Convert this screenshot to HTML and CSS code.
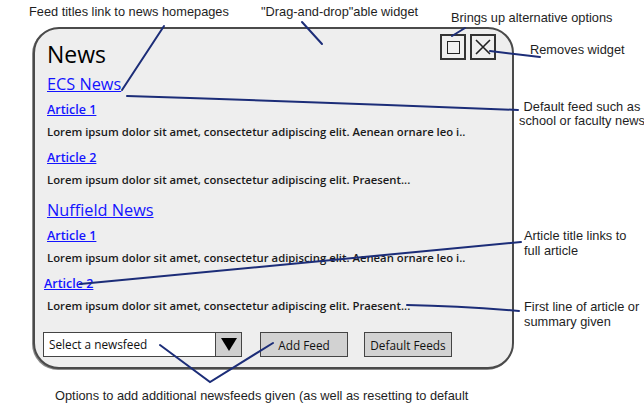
FILE: index.html
```html
<!DOCTYPE html>
<html>
<head>
<meta charset="utf-8">
<link rel="stylesheet" href="styles.css">
</head>
<body>
<div class="canvas">
  <div class="widget">
    <div class="widget-header">
      <h1 class="widget-title">News</h1>
      <div class="widget-tools">
        <button class="tool" aria-label="Options"><span class="tool-square"></span></button>
        <button class="tool" aria-label="Remove">
          <svg width="16" height="16" viewBox="0 0 16 16"><path d="M1 1 L15 15 M15 1 L1 15" stroke="#222" stroke-width="1.6" fill="none"/></svg>
        </button>
      </div>
    </div>

    <section class="feed">
      <a class="feed-title" href="#">ECS News</a>
      <a class="article" href="#">Article 1</a>
      <p class="summary">Lorem ipsum dolor sit amet, consectetur adipiscing elit. Aenean ornare leo i..</p>
      <a class="article" href="#">Article 2</a>
      <p class="summary">Lorem ipsum dolor sit amet, consectetur adipiscing elit. Praesent...</p>
    </section>

    <section class="feed">
      <a class="feed-title" href="#">Nuffield News</a>
      <a class="article" href="#">Article 1</a>
      <p class="summary">Lorem ipsum dolor sit amet, consectetur adipiscing elit. Aenean ornare leo i..</p>
      <a class="article shifted" href="#">Article 2</a>
      <p class="summary">Lorem ipsum dolor sit amet, consectetur adipiscing elit. Praesent...</p>
    </section>

    <div class="controls">
      <div class="select">
        <span class="select-text">Select a newsfeed</span>
        <span class="select-arrow"></span>
      </div>
      <button class="btn add">Add Feed</button>
      <button class="btn reset">Default Feeds</button>
    </div>
  </div>

  <p class="note note-feed">Feed titles link to news homepages</p>
  <p class="note note-drag">"Drag-and-drop"able widget</p>
  <p class="note note-options">Brings up alternative options</p>
  <p class="note note-remove">Removes widget</p>
  <p class="note note-default">Default feed such as<br>school or faculty news</p>
  <p class="note note-article">Article title links to<br>full article</p>
  <p class="note note-first">First line of article or<br>summary given</p>
  <p class="note note-add">Options to add additional newsfeeds given (as well as resetting to default</p>

  <svg class="leaders" width="644" height="420" viewBox="0 0 644 420">
    <g stroke="#1c2d78" stroke-width="2" fill="none" stroke-linecap="round">
      <path d="M164 26 L122 90"/>
      <path d="M302 22 L322 44"/>
      <path d="M127 96 Q320 102 518 110"/>
      <path d="M465 28 L452 36"/>
      <path d="M490 51 L540 57"/>
      <path d="M80 284 L521 242"/>
      <path d="M407 305 Q460 306 519 311"/>
      <path d="M160 345 L210 382 L273 343"/>
    </g>
  </svg>
</div>
</body>
</html>
```
FILE: styles.css
```css
html, body {
  margin: 0;
  padding: 0;
  background: #ffffff;
}

.canvas {
  position: relative;
  width: 644px;
  height: 420px;
  overflow: hidden;
  padding: 27px 0 0 33px;
  box-sizing: border-box;
}

.widget {
  width: 481px;
  height: 342px;
  box-sizing: border-box;
  background: #eeeeee;
  border: 2px solid #4a4a4a;
  border-radius: 26px;
  box-shadow: -1px 1px 0 #8a8a8a;
  padding: 0 12px 0 12px;
  font-family: "Open Sans", "DejaVu Sans", sans-serif;
  color: #151515;
}

.widget-header {
  display: flex;
  justify-content: space-between;
  align-items: flex-start;
  height: 40px;
}

.widget-title {
  margin: 10px 0 0 0;
  font-size: 23px;
  line-height: 30px;
  font-weight: 400;
  color: #000;
}

.widget-tools {
  display: flex;
  gap: 4px;
  margin-top: 5px;
  margin-right: 4px;
}

.tool {
  width: 26px;
  height: 26px;
  box-sizing: border-box;
  border: 2px solid #333;
  background: #efefef;
  padding: 0;
  display: flex;
  align-items: center;
  justify-content: center;
}

.tool-square {
  width: 11px;
  height: 11px;
  border: 1.6px solid #222;
}

.feed {
  display: flex;
  flex-direction: column;
  align-items: flex-start;
}

.feed-title {
  margin-top: 12px;
  font-size: 16.3px;
  line-height: 20px;
  color: #1414ff;
  text-decoration: underline;
}

.feed:first-of-type .feed-title {
  margin-top: 5px;
}

.article {
  margin-top: 10px;
  font-size: 12.5px;
  line-height: 16px;
  font-weight: 600;
  color: #1414ff;
  text-decoration: underline;
}

.feed-title + .article {
  margin-top: 8px;
}

.article.shifted {
  margin-left: -3px;
}

.summary {
  margin: 6px 0 0 0;
  font-size: 11.3px;
  line-height: 16px;
  font-weight: 600;
  color: #1a1a1a;
  white-space: nowrap;
}

.controls {
  display: flex;
  align-items: center;
  margin-top: 18px;
  margin-left: -4px;
}

.select {
  width: 199px;
  height: 25px;
  box-sizing: border-box;
  border: 1.5px solid #444;
  background: #fff;
  display: flex;
  align-items: stretch;
}

.select-text {
  flex: 1;
  padding-left: 5px;
  font-size: 11.8px;
  line-height: 22px;
  font-weight: 500;
  color: #111;
}

.select-arrow {
  width: 25px;
  border-left: 1.5px solid #444;
  background: #cfcfcf;
  position: relative;
}

.select-arrow::after {
  content: "";
  position: absolute;
  left: 5px;
  top: 5px;
  border-left: 8px solid transparent;
  border-right: 8px solid transparent;
  border-top: 13px solid #000;
}

.btn {
  height: 25px;
  width: 88px;
  box-sizing: border-box;
  border: 1.5px solid #444;
  background: #d2d2d2;
  font-family: "Open Sans", "DejaVu Sans", sans-serif;
  font-size: 11.8px;
  font-weight: 500;
  color: #111;
  padding: 0;
}

.add {
  margin-left: 18px;
}

.reset {
  margin-left: 16px;
}

.note {
  position: absolute;
  margin: 0;
  font-family: "Liberation Sans", Arial, sans-serif;
  font-size: 12.8px;
  line-height: 15px;
  color: #1e1e1e;
  white-space: nowrap;
}

.note-feed { left: 29px; top: 4px; }
.note-drag { left: 261px; top: 4px; }
.note-options { left: 451px; top: 10px; }
.note-remove { left: 530px; top: 42px; }
.note-default { left: 519px; top: 100px; text-align: center; line-height: 14px; }
.note-article { left: 524px; top: 228px; }
.note-first { left: 524px; top: 299px; }
.note-add { left: 55px; top: 388px; }

.leaders {
  position: absolute;
  left: 0;
  top: 0;
  pointer-events: none;
}
```
